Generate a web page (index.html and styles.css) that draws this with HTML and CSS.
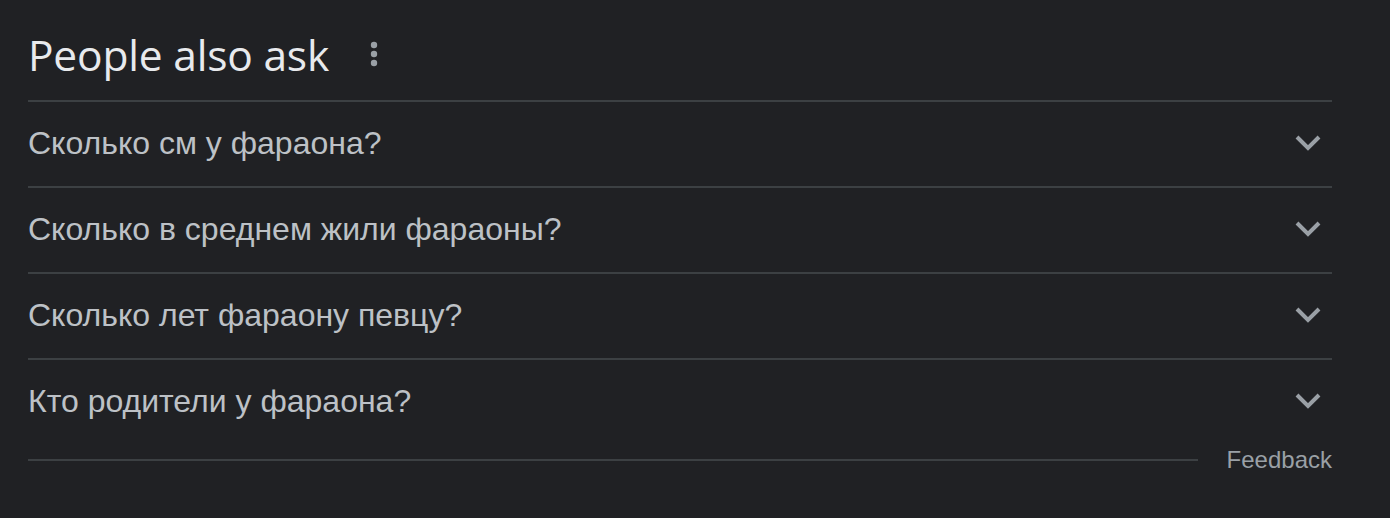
FILE: index.html
```html
<!DOCTYPE html>
<html lang="ru">
<head>
<meta charset="utf-8">
<link rel="stylesheet" href="styles.css">
</head>
<body>
<div class="paa">
  <div class="head">
    <h2 class="title">People also ask</h2>
    <span class="more">
      <svg width="12" height="28" viewBox="0 0 12 28"><circle cx="6" cy="5" r="3.2" fill="#9aa0a6"/><circle cx="6" cy="14" r="3.2" fill="#9aa0a6"/><circle cx="6" cy="23" r="3.2" fill="#9aa0a6"/></svg>
    </span>
  </div>
  <div class="q"><span>Сколько см у фараона?</span><svg class="chev" width="28" height="18" viewBox="0 0 28 18"><path d="M3 3 L14 14 L25 3" fill="none" stroke="#9aa0a6" stroke-width="4"/></svg></div>
  <div class="q"><span>Сколько в среднем жили фараоны?</span><svg class="chev" width="28" height="18" viewBox="0 0 28 18"><path d="M3 3 L14 14 L25 3" fill="none" stroke="#9aa0a6" stroke-width="4"/></svg></div>
  <div class="q"><span>Сколько лет фараону певцу?</span><svg class="chev" width="28" height="18" viewBox="0 0 28 18"><path d="M3 3 L14 14 L25 3" fill="none" stroke="#9aa0a6" stroke-width="4"/></svg></div>
  <div class="q q-last"><span>Кто родители у фараона?</span><svg class="chev" width="28" height="18" viewBox="0 0 28 18"><path d="M3 3 L14 14 L25 3" fill="none" stroke="#9aa0a6" stroke-width="4"/></svg></div>
  <div class="foot"><div class="line"></div><span class="fb">Feedback</span></div>
</div>
</body>
</html>
```
FILE: styles.css
```css
html, body { margin: 0; padding: 0; background: #202124; }
body { width: 1390px; height: 518px; overflow: hidden; }
.paa { width: 1304px; margin-left: 28px; }
.head { height: 100px; display: flex; align-items: center; gap: 39px; border-bottom: 2px solid #3c4043; }
.title { margin: 0; font-family: "Open Sans", Roboto, sans-serif; font-weight: 400; font-size: 42.5px; color: #e8eaed; letter-spacing: -0.2px; padding-top: 8px; }
.more { display: flex; align-items: center; padding-top: 8px; }
.more svg { display: block; }
.q { display: flex; align-items: center; justify-content: space-between; border-bottom: 2px solid #3c4043; font-family: "Liberation Sans", Arial, sans-serif; font-size: 32px; color: #bdc1c6; padding-bottom: 2px; box-sizing: content-box; height: 82px; }
.q-last { border-bottom: none; }
.chev { display: block; margin-right: 10px; }
.foot { display: flex; align-items: center; height: 32px; gap: 29px; }
.line { flex: 1; height: 2px; background: #3c4043; }
.fb { font-family: "Liberation Sans", Arial, sans-serif; font-size: 24px; color: #9aa0a6; }
```
